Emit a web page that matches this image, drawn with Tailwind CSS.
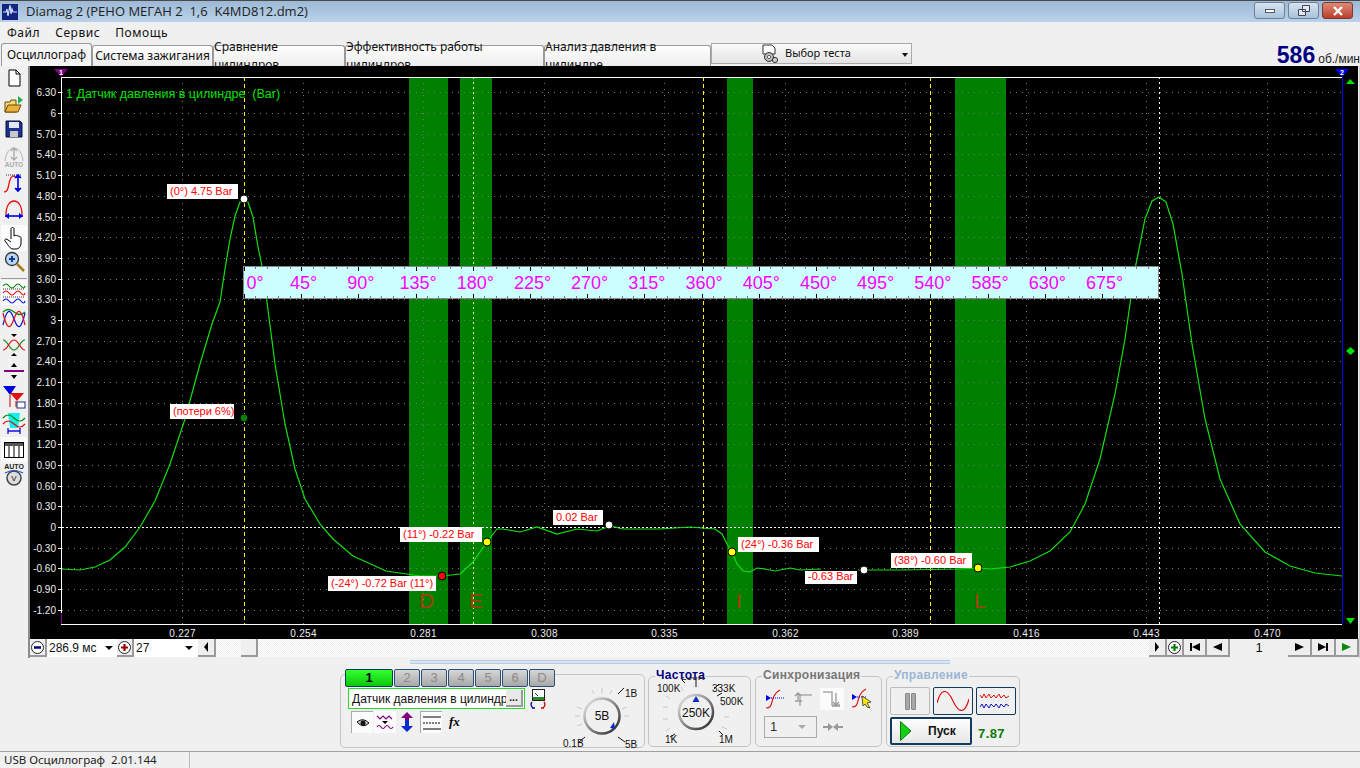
<!DOCTYPE html>
<html lang="ru">
 <head>
  <meta charset="UTF-8"/>
  <title>Diamag 2</title>
  <script src="https://cdn.jsdelivr.net/npm/@tailwindcss/browser@4"></script>
 </head>
 <body class="bg-[#f0f0f0] overflow-hidden font-['Liberation_Sans',sans-serif]">
  <div class="w-[1360px] h-[768px] flex flex-col overflow-hidden">
   <!-- Title bar -->
   <div class="h-[22px] shrink-0 flex items-center justify-between border-t border-[#4a4a4a] bg-gradient-to-b from-[#9db9d6] to-[#bad2e9]">
    <div class="flex items-center">
     <svg class="ml-[2px] w-[16px] h-[16px]" viewBox="0 0 16 16"><rect width="16" height="16" fill="#13237f"/><path d="M1 8h3l1-3 1 7 2-11 1 9 1-5 1 3h4" fill="none" stroke="#cfe0ff" stroke-width="1.2"/></svg>
     <span class="ml-[8px] text-[13px] text-[#222] font-['Open_Sans',sans-serif] whitespace-pre">Diamag 2 (РЕНО МЕГАН 2  1,6  K4MD812.dm2)</span>
    </div>
    <div class="flex gap-[3px] mr-[7px] -mt-[2px]">
     <div class="w-[31px] h-[17px] rounded-[3px] border border-[#6f8199] bg-gradient-to-b from-[#d6e3f0] to-[#a9c2da] flex items-center justify-center"><div class="w-[10px] h-[4px] bg-white border border-[#556]"></div></div>
     <div class="w-[31px] h-[17px] rounded-[3px] border border-[#6f8199] bg-gradient-to-b from-[#d6e3f0] to-[#a9c2da] flex items-center justify-center"><svg class="w-[12px] h-[11px]" viewBox="0 0 12 11"><path d="M4.5.5h7v6h-7zM.5 4.5h7v6h-7z" fill="#dfe8f2" stroke="#445"/></svg></div>
     <div class="w-[31px] h-[17px] rounded-[3px] border border-[#7a3a30] bg-gradient-to-b from-[#dc8a78] to-[#bb3d2a] flex items-center justify-center"><svg class="w-[12px] h-[10px]" viewBox="0 0 12 10"><path d="M2 1l8 8M10 1l-8 8" stroke="#fff" stroke-width="2.4"/></svg></div>
    </div>
   </div>
   <!-- Menu -->
   <div class="h-[21px] shrink-0 flex items-center gap-[15px] pl-[7px] text-[12px] tracking-[0.55px] text-[#111] font-['Noto_Sans',sans-serif]">
    <span>Файл</span><span>Сервис</span><span>Помощь</span>
   </div>
   <!-- Tabs -->
   <div class="h-[23px] shrink-0 flex items-end pl-[1px] text-[12px] text-[#111] font-['Noto_Sans',sans-serif]">
    <div class="w-[91px] h-[23px] flex items-center justify-center bg-[#f4f4f4] border border-b-0 border-[#999] rounded-t-[3px]">Осциллограф</div>
    <div class="w-[121px] h-[21px] flex items-center justify-center bg-gradient-to-b from-white to-[#ececec] border border-b-0 border-[#999] rounded-t-[3px]">Система зажигания</div>
    <div class="w-[132px] h-[21px] flex items-center justify-center bg-gradient-to-b from-white to-[#ececec] border border-b-0 border-[#999] rounded-t-[3px]">Сравнение цилиндров</div>
    <div class="w-[199px] h-[21px] flex items-center justify-center bg-gradient-to-b from-white to-[#ececec] border border-b-0 border-[#999] rounded-t-[3px]">Эффективность работы цилиндров</div>
    <div class="w-[167px] h-[21px] flex items-center justify-center bg-gradient-to-b from-white to-[#ececec] border border-b-0 border-[#999] rounded-t-[3px]">Анализ давления в цилиндре</div>
    <div class="w-[201px] h-[21px] self-start flex items-center bg-gradient-to-b from-[#fafafa] to-[#e4e4e4] border border-[#aaa] relative">
     <svg class="ml-[48px] w-[20px] h-[20px]" viewBox="0 0 20 20"><path d="M3 1h9l3 3v6H3z" fill="#fff" stroke="#333"/><circle cx="9" cy="13" r="4.5" fill="#bbb" stroke="#333"/><circle cx="9" cy="13" r="1.6" fill="#fff" stroke="#333" stroke-width=".7"/><circle cx="15" cy="16" r="2.6" fill="#ccc" stroke="#333"/></svg>
     <span class="ml-[5px] text-[11px]">Выбор теста</span>
     <span class="absolute right-[3px] top-[9px] w-0 h-0 border-x-[3px] border-x-transparent border-t-[4px] border-t-[#111]"></span>
    </div>
    <div class="ml-auto self-start flex items-baseline mt-[-1px]">
     <span class="text-[23px] font-bold text-[#000080] font-['Liberation_Sans',sans-serif] leading-[26px]">586</span>
     <span class="ml-[3px] text-[12px] text-[#222] font-['Liberation_Sans',sans-serif]">об./мин</span>
    </div>
   </div>
   <!-- Work area -->
   <div class="h-[592px] shrink-0 flex">
    <div class="w-[30px] shrink-0 flex flex-col items-center pt-[3px] border-r-2 border-[#8c8c8c]">
     <svg class="w-[18px] h-[18px] mb-[8px]" viewBox="0 0 18 18"><path d="M4 1h7l4 4v12H4z" fill="#fff" stroke="#000"/><path d="M11 1v4h4" fill="none" stroke="#000"/></svg>
     <svg class="w-[20px] h-[20px] mb-[5px]" viewBox="0 0 20 20"><path d="M1 17V7h5l1-2h5v12z" fill="#f6d77a" stroke="#6b4a00"/><path d="M1 17l3-7h13l-3 7z" fill="#e8b23c" stroke="#6b4a00"/><path d="M14 1l5 4-5 4z" fill="#22b14c"/></svg>
     <svg class="w-[18px] h-[18px] mb-[8px]" viewBox="0 0 18 18"><path d="M1 1h14l2 2v14H1z" fill="#1d2f8f" stroke="#0a1240"/><rect x="4" y="2" width="10" height="6" fill="#dfe6ff"/><rect x="5" y="11" width="8" height="6" fill="#c8c8c8"/></svg>
     <svg class="w-[22px] h-[22px] mb-[4px]" viewBox="0 0 22 22"><path d="M2 15C3 6 7 2 11 2s8 4 9 13" fill="none" stroke="#b5b5b5"/><path d="M11 3v10M8 5l3-3 3 3M8 11l3 3 3-3" fill="none" stroke="#aaa" stroke-width="1.4"/><text x="11" y="21" font-size="6.5" font-weight="700" text-anchor="middle" fill="#aaa" font-family="Liberation Sans">AUTO</text></svg>
     <svg class="w-[22px] h-[22px] mb-[5px]" viewBox="0 0 22 22"><path d="M1 20c5 0 4-7 6-12 1-4 4-5 5-3" fill="none" stroke="#ee1111" stroke-width="1.3"/><path d="M3 3h16" stroke="#333" stroke-dasharray="1 1"/><path d="M15 3v16M12 6l3-3 3 3M12 16l3 3 3-3" fill="#0000ee" stroke="#0000ee" stroke-width="1.6"/></svg>
     <svg class="w-[22px] h-[22px] mb-[4px]" viewBox="0 0 22 22"><path d="M3 16C3 6 7 2 11 2s8 4 8 14" fill="none" stroke="#e81010" stroke-width="1.3"/><path d="M2 17h18" stroke="#0000ee" stroke-width="1.6"/><path d="M6 14l-4 3 4 3zM16 14l4 3-4 3z" fill="#0000ee"/></svg>
     <div class="w-[26px] h-[26px] flex items-center justify-center bg-white/70">
      <svg class="w-[22px] h-[24px]" viewBox="0 0 22 24"><path d="M8 13V3c0-2 3-2 3 0v7l1-.5c1-.5 2 0 2 .5 1-.5 2 0 2 .7 1-.3 2 .3 2 1V17c0 3-2 6-5 6H10c-3 0-4-3-8-8-1-1.500 1-3 3-1l3 2" fill="#fff" stroke="#000"/></svg>
     </div>
     <svg class="w-[21px] h-[21px] mb-[6px]" viewBox="0 0 21 21"><circle cx="8" cy="8" r="6.500" fill="#bcd6ef" stroke="#333" stroke-width="1.300"/><path d="M5 8h6M8 5v6" stroke="#123a9c" stroke-width="2"/><path d="M13 13l7 7" stroke="#a67c1e" stroke-width="2.500"/></svg>
     <div class="w-[26px] h-[1px] mb-[1px] bg-[#999]"></div>
     <div class="w-[26px] h-[25px] mb-[2px] flex items-center justify-center bg-white/70">
      <svg class="w-[24px] h-[22px]" viewBox="0 0 24 22" fill="none"><path d="M1 4q3-4 6 0t6 0 6 0 4 0" stroke="#0a8a0a" stroke-width="1.200"/><path d="M1 7h22M1 15h22" stroke="#333" stroke-dasharray="1 1"/><path d="M1 11q3-4 6 0t6 0 6 0 4 0" stroke="#e01010" stroke-width="1.200"/><path d="M1 19q3-4 6 0t6 0 6 0 4 0" stroke="#1010e0" stroke-width="1.200"/></svg>
     </div>
     <svg class="w-[24px] h-[24px] mb-[2px]" viewBox="0 0 24 24" fill="none"><path d="M1 5q5-5 11 0t11 0" stroke="#0a8a0a" stroke-width="1.200"/><path d="M1 18C5 1 8 1 12 12s7 11 11-6" stroke="#1010e0" stroke-width="1.200"/><path d="M1 6C5 23 8 23 12 12s7-11 11 6" stroke="#e01010" stroke-width="1.200"/></svg>
     <svg class="w-[24px] h-[24px] mb-[2px]" viewBox="0 0 24 24" fill="none"><path d="M9 1h6l-3 3zM9 23h6l-3-3z" fill="#000"/><path d="M1 7c5 0 6 10 11 10s6-10 11-10" stroke="#0a8a0a" stroke-width="1.200"/><path d="M1 17c5 0 6-10 11-10s6 10 11 10" stroke="#e01010" stroke-width="1.200"/></svg>
     <svg class="w-[24px] h-[24px] mb-[2px]" viewBox="0 0 24 24"><path d="M9 8l3-4 3 4zM9 16l3 4 3-4z" fill="#000"/><path d="M2 12h20" stroke="#800080" stroke-width="2"/></svg>
     <svg class="w-[24px] h-[24px] mb-[2px]" viewBox="0 0 24 24"><path d="M1 1h13L8 10z" fill="#0000e0"/><path d="M8 8h14l-7 8z" fill="#e01010"/><path d="M8 10v12M14 16v6" stroke="#c00"/><rect x="15" y="17" width="8" height="6" fill="#fff" stroke="#1a2a80"/></svg>
     <svg class="w-[24px] h-[24px] mb-[2px]" viewBox="0 0 24 24" fill="none"><path d="M6 2h12l-2 15H8z" fill="#10f0f0"/><path d="M1 7q5-6 11 0t11 0" stroke="#0a8a0a" stroke-width="1.200"/><path d="M1 13q5-6 11 0t11 0" stroke="#e01010" stroke-width="1.200"/><path d="M6 17v6M18 17v6M6 20h12" stroke="#1010e0" stroke-width="1.300"/></svg>
     <div class="w-[26px] h-[25px] mb-[1px] flex items-center justify-center bg-white/70">
      <svg class="w-[20px] h-[16px]" viewBox="0 0 20 16"><rect x=".5" y=".5" width="19" height="15" fill="#fff" stroke="#000"/><rect x="1" y="1" width="18" height="3" fill="#555"/><path d="M5 4v11M10 4v11M15 4v11" stroke="#000"/></svg>
     </div>
     <svg class="w-[22px] h-[24px]" viewBox="0 0 22 24"><text x="11" y="6" font-size="7" font-weight="700" text-anchor="middle" fill="#222" font-family="Liberation Sans">AUTO</text><circle cx="11" cy="15" r="7" fill="#ddd" stroke="#444" stroke-width="1.500"/><text x="11" y="18" font-size="8" text-anchor="middle" fill="#111" font-family="Liberation Sans">V</text><path d="M2 10q9-5 18 0" fill="none" stroke="#1a4ad0" stroke-width="1.200"/></svg>
    </div>
    <div class="w-[1330px] flex flex-col border-r border-[#cfcfcf]">
     <svg id="plot" class="block w-[1328px] h-[573px] bg-black" viewBox="30 67 1328 573" font-family="Liberation Sans"></svg>
     <!-- Scroll row -->
     <div class="h-[18px] flex items-stretch bg-white text-[12px] text-[#111]">
      <div class="w-[17px] bg-[#eee] border-r-2 border-b-2 border-[#999] flex items-center justify-center"><svg class="w-[13px] h-[13px]" viewBox="0 0 13 13"><circle cx="6.500" cy="6.500" r="6" fill="#fff" stroke="#222"/><path d="M3 6.500h7" stroke="#000080" stroke-width="2.500"/></svg></div>
      <div class="w-[70px] pl-[2px] flex items-center justify-between pr-[4px]"><span>286.9 мс</span><span class="w-0 h-0 border-x-[4px] border-x-transparent border-t-[4px] border-t-black"></span></div>
      <div class="w-[17px] bg-[#eee] border-r-2 border-b-2 border-[#999] flex items-center justify-center"><svg class="w-[13px] h-[13px]" viewBox="0 0 13 13"><circle cx="6.500" cy="6.500" r="6" fill="#fff" stroke="#222"/><path d="M3 6.500h7M6.500 3v7" stroke="#900" stroke-width="2.200"/></svg></div>
      <div class="w-[64px] pl-[2px] flex items-center justify-between pr-[5px]"><span>27</span><span class="w-0 h-0 border-x-[4px] border-x-transparent border-t-[4px] border-t-black"></span></div>
      <div class="w-[18px] bg-[#eee] border-r-2 border-b-2 border-[#999] flex items-center justify-center"><span class="w-0 h-0 border-y-[5px] border-y-transparent border-r-[4px] border-r-black"></span></div>
      <div class="w-[25px] bg-[repeating-conic-gradient(#eee_0_25%,#fff_0_50%)] bg-[length:2px_2px]"></div>
      <div class="w-[17px] bg-[#efefef] border-r-2 border-b-2 border-[#999]"></div>
      <div class="w-[891px] bg-[repeating-conic-gradient(#eee_0_25%,#fff_0_50%)] bg-[length:2px_2px]"></div>
      <div class="w-[18px] bg-[#eee] border-r-2 border-b-2 border-[#999] flex items-center justify-center"><span class="w-0 h-0 border-y-[5px] border-y-transparent border-l-[4px] border-l-black"></span></div>
      <div class="w-[17px] bg-[#eee] border-r-2 border-b-2 border-[#999] flex items-center justify-center"><svg class="w-[13px] h-[13px]" viewBox="0 0 13 13"><circle cx="6.500" cy="6.500" r="6" fill="#fff" stroke="#222"/><path d="M3 6.500h7M6.500 3v7" stroke="#0a7a0a" stroke-width="2.200"/></svg></div>
      <div class="w-[23px] bg-[#eee] border-r-2 border-b-2 border-[#999] flex items-center justify-center"><svg class="w-[10px] h-[8px]" viewBox="0 0 10 8"><path d="M0 0h2v8H0zM10 0v8L2 4z"/></svg></div>
      <div class="w-[23px] bg-[#eee] border-r-2 border-b-2 border-[#999] flex items-center justify-center"><svg class="w-[9px] h-[8px]" viewBox="0 0 9 8"><path d="M9 0v8L0 4z"/></svg></div>
      <div class="w-[58px] bg-[#f0f0f0] flex items-center justify-center text-[13px]">1</div>
      <div class="w-[24px] bg-[#eee] border-r-2 border-b-2 border-[#999] flex items-center justify-center"><svg class="w-[9px] h-[8px]" viewBox="0 0 9 8"><path d="M0 0v8l9-4z"/></svg></div>
      <div class="w-[24px] bg-[#eee] border-r-2 border-b-2 border-[#999] flex items-center justify-center"><svg class="w-[10px] h-[8px]" viewBox="0 0 10 8"><path d="M8 0h2v8H8zM0 0v8l8-4z"/></svg></div>
      <div class="w-[23px] bg-[#eee] border-r-2 border-b-2 border-[#999] flex items-center justify-center"><svg class="w-[9px] h-[8px]" viewBox="0 0 9 8"><path d="M0 0v8l9-4z" fill="#0a8a0a"/></svg></div>
     </div>
    </div>
   </div>
   <!-- Splitter -->
   <div class="h-[8px] shrink-0 pl-[410px] pt-[2px]">
    <div class="w-[540px] h-[4px] bg-[#d7e6f5] border-y border-[#b8cbe0] flex justify-between px-[6px]"><span class="text-[0px]"></span></div>
   </div>
   <!-- Panels -->
   <div class="h-[85px] shrink-0 pl-[340px] flex relative">
    <!-- Channel -->
    <div class="w-[305px] h-[74px] mt-[8px] border border-[#c4c4c4] rounded-[5px] relative">
     <div class="absolute left-[4px] -top-[6px] flex gap-[1px] bg-[#f0f0f0] text-[13px] text-[#8a8a8a]">
      <div class="w-[48px] h-[18px] rounded-[2px] border border-[#0a3d5c] bg-gradient-to-b from-[#30ff30] to-[#08c808] text-[#062] font-bold text-black flex items-center justify-center">1</div>
      <div class="w-[26px] h-[18px] rounded-[2px] border border-[#26527a] bg-gradient-to-b from-[#d6d6d6] to-[#a8a8a8] flex items-center justify-center">2</div>
      <div class="w-[26px] h-[18px] rounded-[2px] border border-[#26527a] bg-gradient-to-b from-[#d6d6d6] to-[#a8a8a8] flex items-center justify-center">3</div>
      <div class="w-[26px] h-[18px] rounded-[2px] border border-[#26527a] bg-gradient-to-b from-[#d6d6d6] to-[#a8a8a8] flex items-center justify-center">4</div>
      <div class="w-[26px] h-[18px] rounded-[2px] border border-[#26527a] bg-gradient-to-b from-[#d6d6d6] to-[#a8a8a8] flex items-center justify-center">5</div>
      <div class="w-[26px] h-[18px] rounded-[2px] border border-[#26527a] bg-gradient-to-b from-[#d6d6d6] to-[#a8a8a8] flex items-center justify-center">6</div>
      <div class="w-[26px] h-[18px] rounded-[2px] border border-[#26527a] bg-gradient-to-b from-[#d6d6d6] to-[#a8a8a8] flex items-center justify-center">D</div>
     </div>
     <div class="absolute left-[7px] top-[13px] w-[177px] h-[21px] bg-white border border-[#22dd22] flex items-center pl-[3px] text-[12px] text-[#111]">
      Датчик давления в цилиндре
      <div class="absolute right-[1px] top-[1px] w-[17px] h-[17px] bg-[#e8e8e8] border-r-2 border-b-2 border-[#999] flex items-center justify-center text-[10px] font-bold leading-none">...</div>
     </div>
     <svg class="absolute left-[189px] top-[14px] w-[16px] h-[21px]" viewBox="0 0 16 21"><rect x="2.500" y=".5" width="12" height="11" fill="#fff" stroke="#222"/><rect x="3" y="8" width="11" height="3" fill="#2a8a2a"/><path d="M5 4l3 3" stroke="#333"/><path d="M2 13a4 4 0 0 0 1 6M5 19H2" fill="none" stroke="#00a" stroke-width="1.300"/><path d="M14 13a4 4 0 0 1-1 6M11 19h3" fill="none" stroke="#c00" stroke-width="1.300"/></svg>
     <div class="absolute left-[10px] top-[36px] flex items-center gap-[1px]">
      <div class="w-[22px] h-[22px] bg-white/70 border-t border-l border-[#aaa] flex items-center justify-center"><svg class="w-[14px] h-[10px]" viewBox="0 0 14 10"><path d="M1 4q6-5 12 1-6 6-12-1z" fill="#ccc" stroke="#111"/><circle cx="7" cy="5" r="2.500" fill="#111"/></svg></div>
      <div class="w-[22px] h-[22px] bg-white/70 flex items-center justify-center"><svg class="w-[18px] h-[18px]" viewBox="0 0 18 18" fill="none"><path d="M1 3l3 3 3-3 3 3 3-3 3 3" stroke="#800080" stroke-width="1.200"/><path d="M1 14q2-3 4 0t4 0 4 0 4 0" stroke="#800080" stroke-width="1.200"/><path d="M6 8h6l-3 3z" fill="#000"/></svg></div>
      <svg class="w-[20px] h-[22px]" viewBox="0 0 14 22"><path d="M7 1l6 6H9v6H5V7H1z" fill="#800080"/><path d="M7 21l6-6H9v-6H5v6H1z" fill="#0a2ad0"/></svg>
      <div class="ml-[2px] w-[22px] h-[22px] bg-white/70 border-t border-l border-[#aaa] flex items-center justify-center"><svg class="w-[18px] h-[14px]" viewBox="0 0 18 14"><path d="M0 1h18M0 13h18" stroke="#000"/><path d="M0 7h18" stroke="#000" stroke-dasharray="2 1"/></svg></div>
      <span class="ml-[6px] text-[13px] font-bold italic font-['Liberation_Serif',serif]">fx</span>
     </div>
     <svg class="absolute left-[222px] top-[10px] w-[78px] h-[64px]" viewBox="0 0 78 64" font-size="10" fill="#111"><g stroke="#c8c8c8"><path d="M29 5l2 4M39 3v5M49 5l-2 4M14 22l5 2M12 31h5M14 41l5-2M64 22l-5 2M66 31h-5"/></g><path d="M22 52l-6 5M55 9l6-6M55 52l7 5" stroke="#111"/><circle cx="39" cy="31" r="17.500" fill="#f0f0f0" stroke="url(#ringA)" stroke-width="2.500"/><defs><linearGradient id="ringA" x1="0" y1="0" x2="1" y2="1"><stop offset="0" stop-color="#eee"/><stop offset="1" stop-color="#222"/></linearGradient></defs><path d="M52 44l-5-1 4-6z" fill="#0a2ad0"/><text x="39" y="35" text-anchor="middle" font-size="12">5В</text><text x="62" y="12">1В</text><text x="0" y="62">0.1В</text><text x="62" y="63">5В</text></svg>
    </div>
    <!-- Frequency -->
    <div class="ml-[3px] w-[103px] h-[71px] mt-[10px] border border-[#c4c4c4] rounded-[5px] relative">
     <span class="absolute left-[6px] -top-[9px] bg-[#f0f0f0] px-[1px] text-[12px] font-bold text-[#000080] leading-[14px] tracking-[0.3px]">Частота</span>
     <svg class="absolute left-0 top-0 w-[101px] h-[69px]" viewBox="0 0 101 69" font-size="10" fill="#111"><g stroke="#c8c8c8"><path d="M17 19l4 3M32 10l2 4M14 30h5M14 42h5M17 54l4-3M78 27l-5 2M80 40h-5M78 52l-5-2"/></g><path d="M47 2v8M36 6l-3 -3M65 12l5-5M68 19l5-3M70 54l4 4M26 57l-5 3" stroke="#111"/><circle cx="47" cy="35" r="17" fill="#f0f0f0" stroke="url(#ringB)" stroke-width="2.500"/><defs><linearGradient id="ringB" x1="0" y1="0" x2="1" y2="1"><stop offset="0" stop-color="#eee"/><stop offset="1" stop-color="#222"/></linearGradient></defs><path d="M47 19l3.500 6h-7z" fill="#0a2ad0"/><text x="47" y="40" text-anchor="middle" font-size="12">250K</text><text x="32" y="3">250K</text><text x="8" y="15">100K</text><text x="63" y="15">333K</text><text x="71" y="28">500K</text><text x="16" y="66">1K</text><text x="70" y="66">1M</text></svg>
    </div>
    <!-- Sync -->
    <div class="ml-[4px] w-[127px] h-[71px] mt-[10px] border border-[#c4c4c4] rounded-[5px] relative">
     <span class="absolute left-[6px] -top-[9px] bg-[#f0f0f0] px-[1px] text-[12px] font-bold text-[#777] leading-[14px] tracking-[0.3px]">Синхронизация</span>
     <div class="absolute left-[8px] top-[11px] flex items-center gap-[2px]">
      <svg class="w-[22px] h-[20px]" viewBox="0 0 22 20" fill="none"><path d="M2 19c7 0 5-7 8-12 2-4 4-5 6-6" stroke="#e01010" stroke-width="1.200"/><path d="M2 6l5 3-5 3z" fill="#0000ee"/><path d="M7 9h13" stroke="#0000ee" stroke-dasharray="1 1"/></svg>
      <svg class="ml-[6px] w-[20px] h-[20px]" viewBox="0 0 20 20" fill="none"><path d="M6 17V6h12" stroke="#aaa" stroke-width="1.500"/><path d="M1 7l3-3 3 3M4 4v7M1 12h7" stroke="#999" stroke-width="1.300"/></svg>
      <div class="ml-[4px] w-[24px] h-[22px] bg-white/70 flex items-center justify-center"><svg class="w-[20px] h-[20px]" viewBox="0 0 20 20" fill="none"><path d="M1 3h9v13h8" stroke="#aaa" stroke-width="1.500"/><path d="M11 13l3 3 3-3M14 4v12M10 17h8" stroke="#999" stroke-width="1.300"/></svg></div>
      <svg class="ml-[4px] w-[24px] h-[22px]" viewBox="0 0 24 22" fill="none"><path d="M2 19c7 0 5-7 8-12 2-4 4-5 6-6" stroke="#e01010" stroke-width="1.200"/><path d="M2 6l5 3-5 3z" fill="#0000ee"/><path d="M7 9h10" stroke="#0000ee" stroke-dasharray="1 1"/><path d="M12 8l9 6-4 1 3 5-3-1-2-3-2 2z" fill="#ffe800" stroke="#333" stroke-width=".8"/></svg>
     </div>
     <div class="absolute left-[8px] top-[39px] w-[53px] h-[22px] border border-[#aaa] flex items-center justify-between pl-[5px] pr-[10px] text-[13px] text-[#333]">1<span class="w-0 h-0 border-x-[4px] border-x-transparent border-t-[4px] border-t-[#aaa]"></span></div>
     <svg class="absolute left-[67px] top-[44px] w-[20px] h-[12px]" viewBox="0 0 20 12"><path d="M0 5h5V2l5 4-5 4V7H0zM20 5h-5V2l-5 4 5 4V7h5z" fill="#999"/></svg>
    </div>
    <!-- Control -->
    <div class="ml-[4px] w-[134px] h-[71px] mt-[10px] border border-[#c4c4c4] rounded-[5px] relative">
     <span class="absolute left-[6px] -top-[9px] bg-[#f0f0f0] px-[1px] text-[12px] font-bold text-[#9db5d5] leading-[14px] tracking-[0.3px]">Управление</span>
     <div class="absolute left-[3px] top-[10px] w-[40px] h-[28px] border border-[#bbb] rounded-[2px] flex items-center justify-center gap-[1px]"><div class="w-[5px] h-[17px] bg-[#a8a8a8] border border-[#888] rounded-[1px]"></div><div class="w-[5px] h-[17px] bg-[#a8a8a8] border border-[#888] rounded-[1px]"></div></div>
     <div class="absolute left-[46px] top-[10px] w-[40px] h-[28px] border border-[#123a5f] rounded-[2px] flex items-center justify-center"><svg class="w-[32px] h-[20px]" viewBox="0 0 32 20" fill="none"><path d="M0 12C4-3 10-3 16 10s12 13 16-2" stroke="#e01010" stroke-width="1.200"/></svg></div>
     <div class="absolute left-[89px] top-[10px] w-[40px] h-[28px] border border-[#123a5f] rounded-[2px] flex items-center justify-center"><svg class="w-[34px] h-[22px]" viewBox="0 0 34 22" fill="none"><path d="M1 5l2 3 2-4 2 4 3-4 2 4 3-3 2 3 3-4 2 4 3-3 2 3 3-2" stroke="#e01010"/><path d="M1 17l2-3 2 4 2-4 3 4 2-4 3 3 2-3 3 4 2-4 3 3 2-3 3 2" stroke="#1010c0"/></svg></div>
     <div class="absolute left-[3px] top-[40px] w-[82px] h-[28px] border-2 border-[#123a5f] rounded-[2px] bg-gradient-to-b from-white to-[#e6e6e6] flex items-center"><svg class="ml-[8px] w-[12px] h-[20px]" viewBox="0 0 12 20"><path d="M.5.5L11 10 .5 19.500z" fill="#12d012" stroke="#0a7a0a"/></svg><span class="ml-[16px] text-[12px] font-bold text-[#111]">Пуск</span></div>
     <span class="absolute left-[91px] top-[47px] text-[13px] font-bold text-[#0a7a0a] tracking-[0.4px]">7.87</span>
    </div>
   </div>
   <!-- Status bar -->
   <div class="h-[17px] shrink-0 flex items-center border-t border-[#a0a0a0] text-[11.500px] text-[#222] font-['Noto_Sans',sans-serif]">
    <div class="w-[190px] h-full pl-[4px] border-r border-[#bbb] flex items-center whitespace-pre">USB Осциллограф  2.01.144</div>
   </div>
  </div>
  <script>
   // Plot is drawn in screen coordinates (the viewBox starts at the plot's corner)
   const yOf = v => 528 - v * 69;
   let s = '';
   const line = (x1, y1, x2, y2, col, extra = '') => `<line x1="${x1}" y1="${y1}" x2="${x2}" y2="${y2}" stroke="${col}" ${extra}/>`;
   const text = (x, y, str, col, size, extra = '') => `<text x="${x}" y="${y}" fill="${col}" font-size="${size}" ${extra}>${str}</text>`;

   // Green bands
   [[409, 39], [460, 32], [727, 26], [955, 51]].forEach(b => s += `<rect x="${b[0]}" y="78" width="${b[1]}" height="547" fill="#008000"/>`);

   // Grid
   const yVals = [6.3, 6, 5.7, 5.4, 5.1, 4.8, 4.5, 4.2, 3.9, 3.6, 3.3, 3, 2.7, 2.4, 2.1, 1.8, 1.5, 1.2, 0.9, 0.6, 0.3, -0.3, -0.6, -0.9, -1.2];
   yVals.forEach(v => {
     const y = Math.round(yOf(v)) + 0.5;
     s += line(62, y, 1342, y, '#777', 'stroke-dasharray="1 5"');
     s += line(58, y, 61, y, '#fff');
     const lbl = Number.isInteger(v) ? String(v) : v.toFixed(2);
     s += text(56, y + 3.5, lbl, '#eee', 10, 'text-anchor="end"');
   });
   s += line(58, 528.5, 61, 528.5, '#fff') + text(56, 532, '0', '#eee', 10, 'text-anchor="end"');
   ['0.227', '0.254', '0.281', '0.308', '0.335', '0.362', '0.389', '0.416', '0.443', '0.470'].forEach((l, i) => {
     const x = Math.round(182 + i * 120.5) + 0.5;
     s += line(x, 78, x, 629, '#777', 'stroke-dasharray="1 5"');
     s += text(x, 638, l, '#eee', 10, 'text-anchor="middle" letter-spacing="0.3"');
   });

   // Cursors
   [244, 703, 930].forEach(x => s += line(x + 0.5, 78, x + 0.5, 625, '#ffff00', 'stroke-dasharray="4 3"'));
   [473, 1159].forEach(x => s += line(x + 0.5, 78, x + 0.5, 625, '#fff', 'stroke-dasharray="2 3"').replace('#fff', x === 473 ? '#e8ffa0' : '#fff'));
   s += line(62, 528.5, 1342, 528.5, '#fff', 'stroke-dasharray="2 2"');

   // Frame
   s += line(61, 78.5, 1342, 78.5, '#fff') + line(61, 625.5, 1342, 625.5, '#fff') + line(61.5, 78, 61.5, 625, '#fff');
   s += line(61.5, 614, 61.5, 625, '#800080') + line(1342.5, 78, 1342.5, 625, '#0000ff');
   s += `<path d="M54 70h14l-7 8z" fill="#800080"/><path d="M1335 70h14l-7 8z" fill="#0000ff"/>`;
   s += text(61, 76, '1', '#fff', 7, 'text-anchor="middle" font-weight="700"') + text(1342, 76, '2', '#fff', 7, 'text-anchor="middle" font-weight="700"');
   s += `<path d="M1346 85l4-5 5 5z" fill="#00e000"/><path d="M1346 352l4.500-4 4.500 4-4.500 4z" fill="#00e000"/><path d="M1346 619h9l-4.500 6z" fill="#00e000"/>`;

   // Band letters
   [[419, 'D'], [469, 'E'], [736, 'I'], [974, 'L']].forEach(l => s += text(l[0], 609, l[1], '#a83c10', 21));

   s += text(66, 99, '1 Датчик давления в цилиндре  (Bar)', '#00e000', 12.500, 'xml:space="preserve"');

   // Pressure curve
   const curveA = [[62,570],[80,571],[95,568],[110,561],[125,548],[140,528],[155,502],[170,465],[185,420],[200,365],[212,325],[220,303],[225,270],[230,240],[235,217],[240,203],[244,199],[248,203],[253,218],[258,248],[262,267],[267,303],[275,365],[285,425],[295,470],[305,500],[320,525],[333,540],[353,557],[386,572],[420,577],[442,577],[460,575],[473,563],[487,543],[497,530],[503,530],[520,533],[537,528],[557,535],[577,530],[597,532],[610,527],[623,530],[660,530],[690,528],[702,529],[715,530],[722,535],[727,545],[732,553],[737,565],[743,572],[750,573],[757,569],[765,570],[775,572],[790,569],[800,571],[821,570]];
   const curveB = [[858,571],[900,571],[960,570],[978,569],[990,570],[1010,568],[1030,562],[1050,552],[1070,533],[1085,505],[1100,460],[1115,395],[1125,340],[1135,270],[1145,220],[1152,202],[1159,198],[1166,203],[1173,225],[1182,275],[1192,345],[1205,420],[1220,480],[1240,525],[1265,553],[1290,567],[1315,574],[1342,577]];
   [curveA, curveB].forEach(c => s += `<polyline points="${c.map(p => p.join(',')).join(' ')}" fill="none" stroke="#10e010" stroke-width="1.200"/>`);

   // Angle ruler
   s += `<rect x="243.500" y="267.500" width="915" height="32" fill="#ccffff" stroke="#888"/>`;
   for (let i = 0; i <= 80; i++) {
     const x = Math.round(244 + i * 11.44) + 0.5;
     if (x > 1158) break;
     const major = i % 5 === 0;
     s += line(x, 268, x, major ? 272 : 270, major ? '#000' : '#777') + line(x, 299, x, major ? 295 : 297, major ? '#000' : '#777');
   }
   for (let i = 0; i < 16; i++) {
     const x = i === 0 ? 255 : 246.500 + i * 57.2;
     s += text(x, 290, (i * 45) + '°', '#ff00ff', 18, 'text-anchor="middle"');
   }

   // Point labels
   [[167, 185, 71, 15, '(0°) 4.75 Bar'], [170, 405, 64, 15, '(потери 6%)'], [400, 528, 82, 15, '(11°) -0.22 Bar'], [328, 577, 108, 15, '(-24°) -0.72 Bar (11°)'], [553, 511, 50, 15, '0.02 Bar'], [738, 538, 81, 15, '(24°) -0.36 Bar'], [805, 572, 52, 13, '-0.63 Bar'], [891, 554, 81, 15, '(38°) -0.60 Bar']].forEach(l => {
     s += `<rect x="${l[0]}" y="${l[1]}" width="${l[2]}" height="${l[3]}" fill="#fff"/>`;
     s += text(l[0] + 3, l[1] + l[3] - 4, l[4], '#ff0000', 11);
   });

   // Markers
   [[244, 200, '#fff'], [244, 419, '#008000'], [442, 577, '#ff0000'], [487, 543, '#ffff00'], [609, 526, '#fff'], [732, 553, '#ffff00'], [864, 571, '#fff'], [978, 569, '#ffff00']].forEach(m => {
     s += `<circle cx="${m[0]}" cy="${m[1]}" r="4" fill="${m[2]}" stroke="#000"/>`;
   });
   document.getElementById('plot').innerHTML = s;
  </script>
 </body>
</html>
